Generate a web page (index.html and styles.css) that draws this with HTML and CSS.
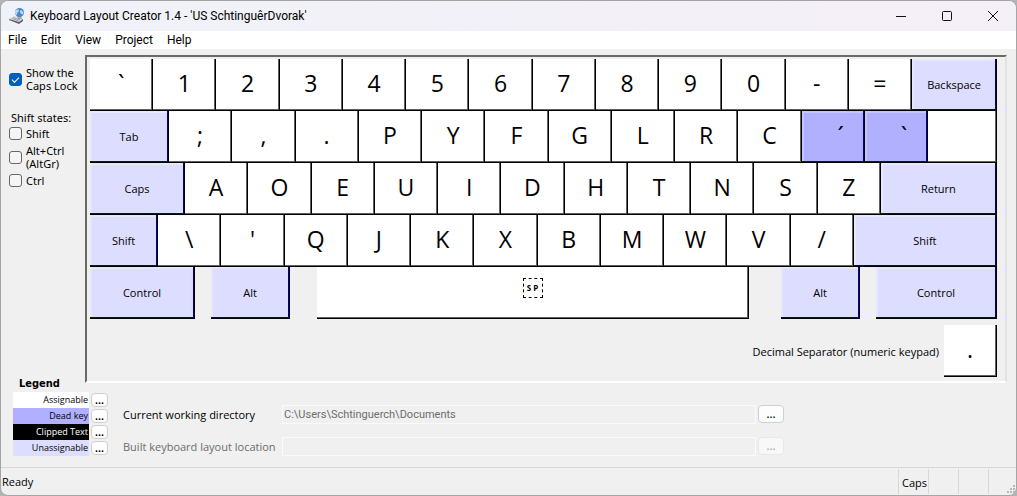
FILE: index.html
```html
<!DOCTYPE html>
<html lang="en">
<head>
    <meta charset="UTF-8">
    <meta name="viewport" content="width=device-width, initial-scale=1.0">
    <title>Keyboard Layout Creator 1.4</title>
    <link rel="stylesheet" href="styles.css">
</head>
<body>
    <div class="window">
        <!-- Title bar -->
        <header class="title-bar">
            <svg class="app-icon" width="16" height="16" viewBox="0 0 16 16">
                <path d="M0 11l5-3 9 3-4 3z" fill="#d9dcde"/>
                <path d="M0 11l10 3v2l-10-4zM10 14l4-3v2l-4 3z" fill="#5b5f63"/>
                <path d="M4 9.500l7 2.500M2.500 10.500l7 2.500" stroke="#9da2a6"/>
                <path d="M8 8h4l1 3-4 0z" fill="#9aa6b0"/>
                <circle cx="10.500" cy="4.500" r="4.500" fill="#4a86cc"/>
                <path d="M7 2c2-1 3 0 3 1s-2 1-2 3-2 0-2-1 0-2 1-3zM12 2c2 1 3 3 2 4s-3-1-3-2 0-2 1-2z" fill="#b7d7f3"/>
            </svg>
            <span class="title">Keyboard Layout Creator 1.4 - 'US SchtinguêrDvorak'</span>
            <div class="window-buttons">
                <button type="button" aria-label="Minimize"><svg width="12" height="12" viewBox="0 0 12 12"><path d="M1 6.500h10"/></svg></button>
                <button type="button" aria-label="Maximize"><svg width="12" height="12" viewBox="0 0 12 12"><rect x="1.500" y="1.500" width="9" height="9" rx="1"/></svg></button>
                <button type="button" aria-label="Close"><svg width="12" height="12" viewBox="0 0 12 12"><path d="M1 1l10 10M11 1L1 11"/></svg></button>
            </div>
        </header>

        <nav class="menu-bar">
            <button type="button">File</button>
            <button type="button">Edit</button>
            <button type="button">View</button>
            <button type="button">Project</button>
            <button type="button">Help</button>
        </nav>

        <main class="workspace">
            <!-- Left column -->
            <aside class="sidebar">
                <label class="check"><input type="checkbox" checked><span>Show the<br>Caps Lock</span></label>
                <fieldset class="shift-states">
                    <legend>Shift states:</legend>
                    <label class="check"><input type="checkbox"><span>Shift</span></label>
                    <label class="check"><input type="checkbox"><span>Alt+Ctrl<br>(AltGr)</span></label>
                    <label class="check"><input type="checkbox"><span>Ctrl</span></label>
                </fieldset>
                <section class="legend">
                    <h2>Legend</h2>
                    <div class="legend-row"><span class="swatch assignable">Assignable</span><button type="button" class="more">...</button></div>
                    <div class="legend-row"><span class="swatch dead">Dead key</span><button type="button" class="more">...</button></div>
                    <div class="legend-row"><span class="swatch clipped">Clipped Text</span><button type="button" class="more">...</button></div>
                    <div class="legend-row"><span class="swatch unassignable">Unassignable</span><button type="button" class="more">...</button></div>
                </section>
            </aside>

            <div class="content">
                <!-- Keyboard -->
                <section class="keyboard">
                    <div class="key-row">
                        <button type="button" class="key">`</button>
                        <button type="button" class="key">1</button>
                        <button type="button" class="key">2</button>
                        <button type="button" class="key">3</button>
                        <button type="button" class="key">4</button>
                        <button type="button" class="key">5</button>
                        <button type="button" class="key">6</button>
                        <button type="button" class="key">7</button>
                        <button type="button" class="key">8</button>
                        <button type="button" class="key">9</button>
                        <button type="button" class="key">0</button>
                        <button type="button" class="key">-</button>
                        <button type="button" class="key">=</button>
                        <button type="button" class="key fixed backspace">Backspace</button>
                    </div>
                    <div class="key-row">
                        <button type="button" class="key fixed tab">Tab</button>
                        <button type="button" class="key">;</button>
                        <button type="button" class="key">,</button>
                        <button type="button" class="key">.</button>
                        <button type="button" class="key">P</button>
                        <button type="button" class="key">Y</button>
                        <button type="button" class="key">F</button>
                        <button type="button" class="key">G</button>
                        <button type="button" class="key">L</button>
                        <button type="button" class="key">R</button>
                        <button type="button" class="key">C</button>
                        <button type="button" class="key dead-key">´</button>
                        <button type="button" class="key dead-key">`</button>
                        <button type="button" class="key oem" aria-label="Unassigned"></button>
                    </div>
                    <div class="key-row">
                        <button type="button" class="key fixed caps-lock">Caps</button>
                        <button type="button" class="key">A</button>
                        <button type="button" class="key">O</button>
                        <button type="button" class="key">E</button>
                        <button type="button" class="key">U</button>
                        <button type="button" class="key">I</button>
                        <button type="button" class="key">D</button>
                        <button type="button" class="key">H</button>
                        <button type="button" class="key">T</button>
                        <button type="button" class="key">N</button>
                        <button type="button" class="key">S</button>
                        <button type="button" class="key">Z</button>
                        <button type="button" class="key fixed return">Return</button>
                    </div>
                    <div class="key-row">
                        <button type="button" class="key fixed left-shift">Shift</button>
                        <button type="button" class="key">\</button>
                        <button type="button" class="key">'</button>
                        <button type="button" class="key">Q</button>
                        <button type="button" class="key">J</button>
                        <button type="button" class="key">K</button>
                        <button type="button" class="key">X</button>
                        <button type="button" class="key">B</button>
                        <button type="button" class="key">M</button>
                        <button type="button" class="key">W</button>
                        <button type="button" class="key">V</button>
                        <button type="button" class="key">/</button>
                        <button type="button" class="key fixed right-shift">Shift</button>
                    </div>
                    <div class="key-row">
                        <button type="button" class="key fixed left-control">Control</button>
                        <button type="button" class="key fixed alt">Alt</button>
                        <button type="button" class="key space"><span class="sp">S P</span></button>
                        <button type="button" class="key fixed alt">Alt</button>
                        <button type="button" class="key fixed right-control">Control</button>
                    </div>
                    <div class="decimal-row">
                        <label for="decimal">Decimal Separator (numeric keypad)</label>
                        <button type="button" class="key decimal" id="decimal">.</button>
                    </div>
                </section>

                <!-- Directories -->
                <form class="paths">
                    <div class="path-row">
                        <label for="workingDir">Current working directory</label>
                        <input type="text" id="workingDir" value="C:\Users\Schtinguerch\Documents" readonly>
                        <button type="button" class="browse">...</button>
                    </div>
                    <div class="path-row disabled">
                        <label for="builtDir">Built keyboard layout location</label>
                        <input type="text" id="builtDir" disabled>
                        <button type="button" class="browse" disabled>...</button>
                    </div>
                </form>
            </div>
        </main>

        <footer class="status-bar">
            <span class="status">Ready</span>
            <span class="pane">Caps</span>
            <span class="pane"></span>
            <span class="pane"></span>
            <span class="pane grip">
                <svg width="9" height="9" viewBox="0 0 9 9"><path d="M6 0h2v2h-2zM3 3h2v2h-2zM6 3h2v2h-2zM0 6h2v2h-2zM3 6h2v2h-2zM6 6h2v2h-2z" fill="#b8b8b8"/></svg>
            </span>
        </footer>
    </div>
</body>
</html>
```

FILE: styles.css
```css
* {
    box-sizing: border-box;
}

body {
    margin: 0;
    background: #b4b4b4;
    font-family: "Open Sans", "Noto Sans", sans-serif;
    font-size: 11px;
    line-height: 13px;
    color: #000;
}

button,
input {
    font: inherit;
    color: inherit;
}

.window {
    display: flex;
    flex-direction: column;
    min-height: 100vh;
    border: 1px solid #a5a5a5;
    border-radius: 8px;
    background: #f0f0f0;
    overflow: hidden;
}

/* Title bar */
.title-bar {
    display: flex;
    align-items: center;
    height: 30px;
    padding-left: 8px;
    background: linear-gradient(90deg, #f0f2f9, #f5eff7);
}

.title {
    flex: 1;
    padding-left: 5px;
    font-family: Roboto, sans-serif;
    font-size: 12px;
}

.window-buttons {
    display: flex;
}

.window-buttons button {
    width: 46px;
    height: 28px;
    padding: 0;
    border: none;
    background: none;
}

.window-buttons svg {
    display: block;
    margin: 0 auto;
    fill: none;
    stroke: #111;
}

.menu-bar {
    display: flex;
    height: 18px;
    background: #fff;
}

.menu-bar button {
    padding: 0 7px;
    border: none;
    background: none;
    font-family: Roboto, sans-serif;
    font-size: 12px;
}

.workspace {
    display: flex;
    flex: 1;
}

/* Left column */
.sidebar {
    display: flex;
    flex-direction: column;
    width: 84px;
    padding: 17px 0 11px 8px;
    font-family: "Noto Sans", sans-serif;
}

.check {
    display: flex;
    align-items: center;
    gap: 4px;
}

.check input {
    appearance: none;
    width: 13px;
    height: 13px;
    margin: 0;
    border: 1px solid #666;
    border-radius: 3px;
    background: #f5f5f5;
}

.check input:checked {
    border-color: #005fb8;
    background: #005fb8;
}

.check input:checked::before {
    content: "";
    display: block;
    width: 6px;
    height: 3px;
    margin: 3px 0 0 2px;
    border-left: 1px solid #fff;
    border-bottom: 1px solid #fff;
    transform: rotate(-45deg);
}

.shift-states {
    display: flex;
    flex-direction: column;
    gap: 4px;
    margin: 19px 0 0;
    padding: 0;
    border: none;
}

.shift-states legend {
    margin-bottom: 3px;
    padding: 0 0 0 2px;
}

.legend {
    width: 100px;
    margin-top: auto;
    padding-left: 4px;
}

.legend h2 {
    margin: 0 0 2px;
    padding-left: 6px;
    font-family: "DejaVu Sans Condensed", sans-serif;
    font-size: 11px;
    line-height: 13px;
}

.legend-row {
    display: flex;
    align-items: center;
    gap: 2px;
    height: 16px;
}

.swatch {
    width: 76px;
    height: 16px;
    padding-right: 1px;
    font-family: "Open Sans", sans-serif;
    font-size: 9px;
    line-height: 16px;
    text-align: right;
}

.assignable {
    background: #fff;
}

.dead {
    background: #b0b0ff;
}

.clipped {
    background: #000;
    color: #fff;
}

.unassignable {
    background: #ddddff;
}

.more,
.browse {
    padding: 0;
    border: 1px solid #d0d0d0;
    border-radius: 4px;
    background: #fdfdfd;
    font-weight: 600;
}

.more {
    width: 17px;
    height: 14px;
    line-height: 10px;
}

/* Keyboard */
.content {
    flex: 1;
    padding: 6px 9px 0 0;
}

.keyboard {
    padding: 2px 8px 4px 3px;
    border: 2px solid;
    border-color: #696969 #e3e3e3 #fff #696969;
}

.key-row {
    display: flex;
}

.key {
    flex: 1 1 0;
    min-width: 0;
    height: 52px;
    padding: 0 0 3px;
    border: solid #000;
    border-width: 0 1px 1px 0;
    background: #fff;
    box-shadow: inset -1px -1px #606060;
    font-size: 23px;
    line-height: 32px;
}

.fixed {
    flex: none;
    padding: 0;
    background: #ddddff;
    box-shadow: inset -1px -1px #0000a0, inset 2px 2px #e6e6ff;
    font-size: 11px;
}

.dead-key {
    background: #b0b0ff;
    box-shadow: inset -1px -1px #0000a0, inset 2px 2px #c4c4ff;
    text-indent: 16px;
}

.backspace { width: 85px; }
.tab { width: 79px; }
.oem { flex: none; width: 69px; }
.caps-lock { width: 95px; }
.return { width: 116px; }
.left-shift { width: 68px; }
.right-shift { width: 143px; }
.left-control { width: 105px; }
.right-control { width: 121px; }

.alt {
    width: 79px;
    margin: 0 16px;
}

.space {
    margin: 0 16px 0 11px;
}

.sp {
    display: block;
    width: 20px;
    height: 20px;
    margin: 0 auto 7px;
    border: 1px dashed #000;
    font-size: 8px;
    font-weight: bold;
    line-height: 18px;
}

.decimal-row {
    display: flex;
    justify-content: flex-end;
    align-items: center;
    gap: 5px;
    margin-top: 6px;
}

.decimal {
    flex: none;
    width: 53px;
}

/* Directories */
.paths {
    display: flex;
    flex-direction: column;
    gap: 12px;
    padding: 21px 223px 0 38px;
}

.path-row {
    display: flex;
    align-items: center;
    height: 20px;
}

.path-row label {
    width: 159px;
}

.path-row input {
    flex: 1;
    height: 19px;
    padding: 0 1px;
    border: 1px solid #fafafa;
    background: #f0f0f0;
    color: #6d6d6d;
    font-family: Roboto, sans-serif;
}

.browse {
    width: 26px;
    height: 18px;
    margin-left: 2px;
    line-height: 12px;
}

.disabled {
    color: #6d6d6d;
}

.disabled .browse {
    border-color: #e8e8e8;
    background: #f8f8f8;
    color: #aaa;
}

/* Status bar */
.status-bar {
    display: flex;
    height: 28px;
    border-top: 1px solid #d7d7d7;
    line-height: 28px;
}

.status {
    flex: 1;
    padding-left: 1px;
}

.pane {
    width: 30px;
    height: 25px;
    margin-top: 1px;
    padding-left: 3px;
    border-left: 1px solid #d7d7d7;
}

.grip {
    display: flex;
    justify-content: flex-end;
    align-items: flex-end;
    width: 28px;
}
```
